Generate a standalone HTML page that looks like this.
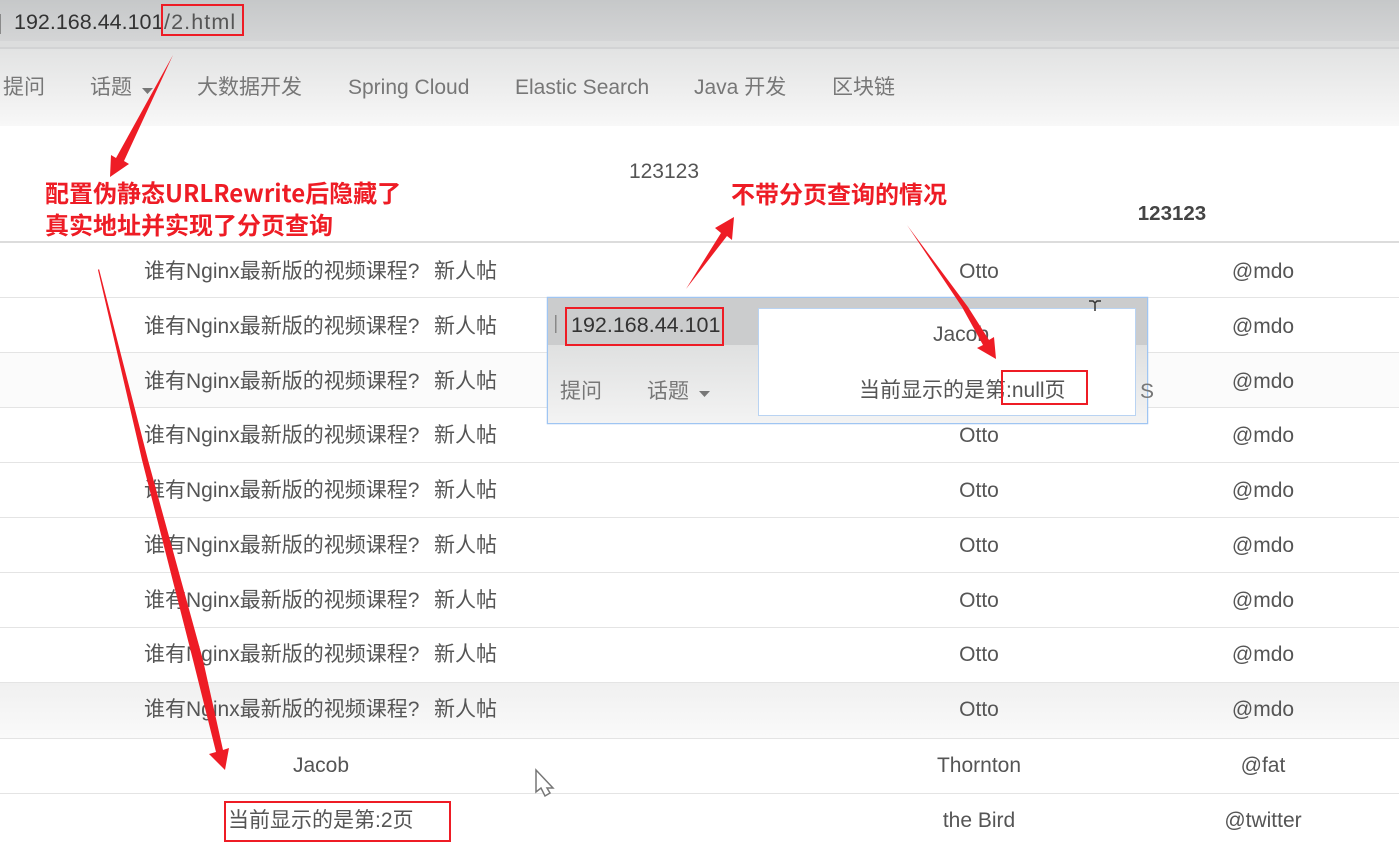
<!DOCTYPE html>
<html><head><meta charset="utf-8"><style>
html,body{margin:0;padding:0;background:#fff;width:1399px;height:849px;overflow:hidden}
svg{display:block;position:absolute;left:0;top:0}
text{font-family:"Liberation Sans","Noto Sans CJK SC",sans-serif;font-size:21px;fill:#555}
.c{text-anchor:middle}
.n{fill:#777}
.r{font-family:"Noto Sans CJK SC",sans-serif;font-weight:700;font-size:24px;fill:#ee1c25}
.u{fill:#333;font-size:21.5px}
</style></head><body>
<svg width="1399" height="849" viewBox="0 0 1399 849">
<defs>
<linearGradient id="a" x1="0" y1="0" x2="0" y2="1"><stop offset="0" stop-color="#c6c8c9"/><stop offset="1" stop-color="#d4d5d6"/></linearGradient>
<linearGradient id="b" x1="0" y1="0" x2="0" y2="1"><stop offset="0" stop-color="#e2e3e3"/><stop offset=".6" stop-color="#efefef"/><stop offset="1" stop-color="#f8f8f8"/></linearGradient>
<linearGradient id="g" x1="0" y1="0" x2="0" y2="1"><stop offset="0" stop-color="#f0f0f0"/><stop offset="1" stop-color="#fafafa"/></linearGradient>
<linearGradient id="p" x1="0" y1="0" x2="0" y2="1"><stop offset="0" stop-color="#dfe0e0"/><stop offset="1" stop-color="#f3f3f3"/></linearGradient>
</defs>
<rect width="1399" height="849" fill="#fff"/>
<!-- browser bar -->
<rect width="1399" height="41" fill="url(#a)"/>
<rect y="41" width="1399" height="6" fill="#dcdddd"/>
<rect y="47" width="1399" height="2" fill="#d2d3d4"/>
<rect y="49" width="1399" height="77" fill="url(#b)"/>
<rect x="0" y="14" width="1" height="20" fill="#8a8a8a"/>
<text x="14" y="29" class="u">192.168.44.101</text>
<text x="164" y="29" class="u" style="fill:#555;letter-spacing:1.1px">/2.html</text>
<rect x="162" y="5" width="81" height="30" fill="none" stroke="#ee1c25" stroke-width="2"/>
<!-- nav -->
<text x="3" y="94" class="n">提问</text>
<text x="90" y="94" class="n">话题</text>
<polygon points="142,88 153,88 147.5,94" fill="#777"/>
<text x="197" y="94" class="n">大数据开发</text>
<text x="348" y="94" class="n">Spring Cloud</text>
<text x="515" y="94" class="n">Elastic Search</text>
<text x="694" y="94" class="n">Java 开发</text>
<text x="832" y="94" class="n">区块链</text>
<!-- headings -->
<text x="664" y="178" class="c">123123</text>
<text x="1172" y="220" class="c" style="font-weight:700;fill:#444;font-size:20.5px">123123</text>
<!-- grey rows -->
<rect y="353" width="1399" height="54" fill="#fbfbfb"/>
<rect y="683" width="1399" height="55" fill="url(#g)"/>
<!-- lines -->
<rect y="241" width="1399" height="2" fill="#dcdcdc"/>
<g fill="#e4e4e4">
<rect y="297" width="1399" height="1"/><rect y="352" width="1399" height="1"/><rect y="407" width="1399" height="1"/>
<rect y="462" width="1399" height="1"/><rect y="517" width="1399" height="1"/><rect y="572" width="1399" height="1"/>
<rect y="627" width="1399" height="1"/><rect y="682" width="1399" height="1"/><rect y="738" width="1399" height="1"/>
<rect y="793" width="1399" height="1"/>
</g>
<!-- rows -->
<g>
<text x="144" y="278">谁有Nginx最新版的视频课程?</text><text x="434" y="278">新人帖</text><text x="979" y="278" class="c">Otto</text><text x="1263" y="278" class="c">@mdo</text>
<text x="144" y="333">谁有Nginx最新版的视频课程?</text><text x="434" y="333">新人帖</text><text x="1263" y="333" class="c">@mdo</text>
<text x="144" y="388">谁有Nginx最新版的视频课程?</text><text x="434" y="388">新人帖</text><text x="1263" y="388" class="c">@mdo</text>
<text x="144" y="442">谁有Nginx最新版的视频课程?</text><text x="434" y="442">新人帖</text><text x="979" y="442" class="c">Otto</text><text x="1263" y="442" class="c">@mdo</text>
<text x="144" y="497">谁有Nginx最新版的视频课程?</text><text x="434" y="497">新人帖</text><text x="979" y="497" class="c">Otto</text><text x="1263" y="497" class="c">@mdo</text>
<text x="144" y="552">谁有Nginx最新版的视频课程?</text><text x="434" y="552">新人帖</text><text x="979" y="552" class="c">Otto</text><text x="1263" y="552" class="c">@mdo</text>
<text x="144" y="607">谁有Nginx最新版的视频课程?</text><text x="434" y="607">新人帖</text><text x="979" y="607" class="c">Otto</text><text x="1263" y="607" class="c">@mdo</text>
<text x="144" y="661">谁有Nginx最新版的视频课程?</text><text x="434" y="661">新人帖</text><text x="979" y="661" class="c">Otto</text><text x="1263" y="661" class="c">@mdo</text>
<text x="144" y="716">谁有Nginx最新版的视频课程?</text><text x="434" y="716">新人帖</text><text x="979" y="716" class="c">Otto</text><text x="1263" y="716" class="c">@mdo</text>
<text x="321" y="772" class="c">Jacob</text><text x="979" y="772" class="c">Thornton</text><text x="1263" y="772" class="c">@fat</text>
<text x="228" y="827">当前显示的是第:2页</text><text x="979" y="827" class="c">the Bird</text><text x="1263" y="827" class="c">@twitter</text>
</g>
<rect x="225" y="802" width="225" height="39" fill="none" stroke="#ee1c25" stroke-width="2"/>
<!-- popup -->
<rect x="547.5" y="297.5" width="600" height="126" fill="#fff" stroke="#9fc5f2" stroke-width="1.5"/>
<rect x="548" y="298" width="599" height="47" fill="#cbcccd"/>
<rect x="548" y="345" width="599" height="78" fill="url(#p)"/>
<rect x="555" y="315" width="1.5" height="18" fill="#888"/>
<text x="571" y="332" class="u">192.168.44.101</text>
<rect x="566" y="308" width="157" height="37" fill="none" stroke="#ee1c25" stroke-width="2"/>
<text x="560" y="398" class="n">提问</text>
<text x="647" y="398" class="n">话题</text>
<polygon points="699,391 710,391 704.5,397" fill="#777"/>
<text x="1140" y="398" class="n">S</text>
<rect x="758.5" y="308.5" width="377" height="107" fill="#fff" stroke="#b9d3f2" stroke-width="1"/>
<text x="961" y="341" class="c">Jacob</text>
<text x="859" y="397">当前显示的是第:null页</text>
<rect x="1002" y="371" width="85" height="33" fill="none" stroke="#ee1c25" stroke-width="2"/>
<!-- I-beam cursor -->
<path d="M1089 301h4l2 2 2-2h4M1095 303v8" fill="none" stroke="#333" stroke-width="1.5"/>
<!-- arrows -->
<g fill="#ee1c25">
<polygon points="173,55 124,161 129,164 110,177 111,155 116,158"/>
<polygon points="99,269 148,460 203,660 223,750 229,748 225,770 209,754 216,752 193,660 142,460 98,270"/>
<polygon points="686,289 721,233 715,228 734,217 732,240 727,236"/>
<polygon points="907,225 968,307 989,340 994,337 996,359 977,348 983,345 962,307"/>
</g>
<!-- pointer -->
<path d="M536 770v22l5-4 4 8 5-3-3-5h6z" fill="#fff" stroke="#777" stroke-width="1.5"/>
<!-- annotations -->
<text x="45" y="202" class="r">配置伪静态URLRewrite后隐藏了</text>
<text x="45" y="234" class="r">真实地址并实现了分页查询</text>
<text x="731" y="203" class="r">不带分页查询的情况</text>
</svg>
</body></html>
